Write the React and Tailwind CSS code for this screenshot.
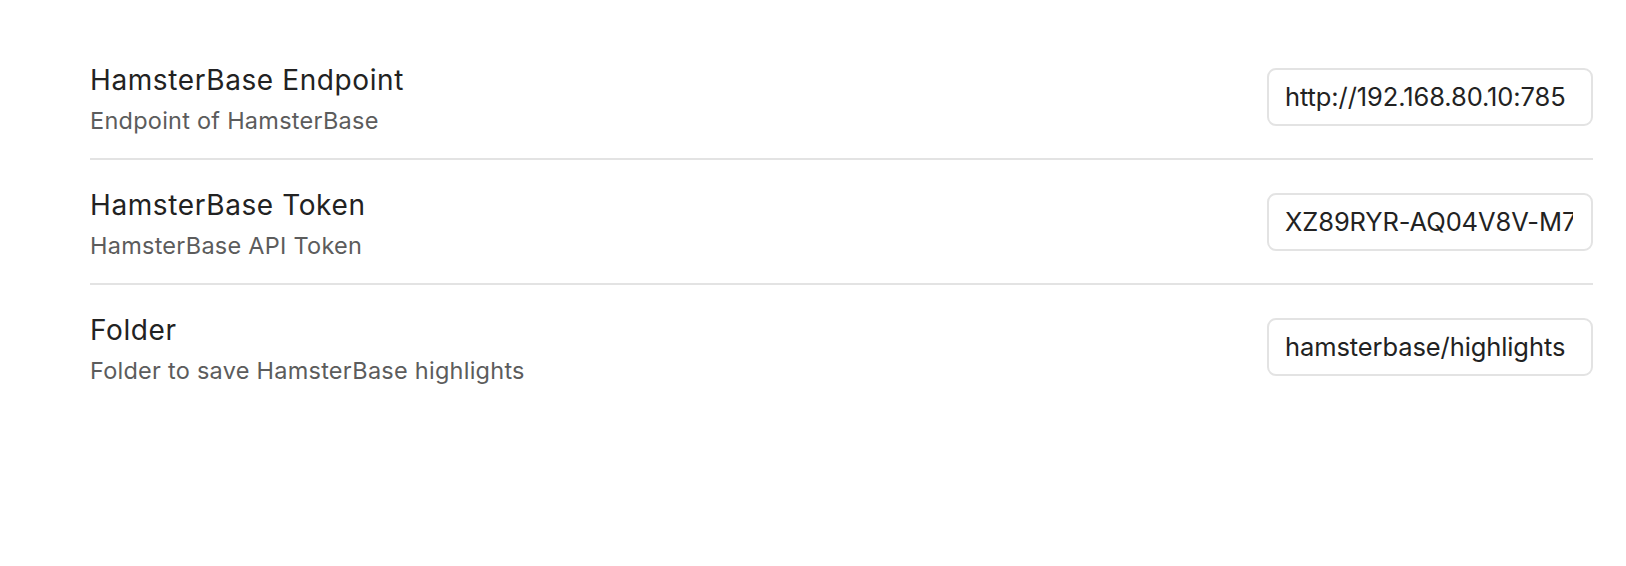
import { useState } from "react";

const settings = [
  {
    name: "HamsterBase Endpoint",
    desc: "Endpoint of HamsterBase",
    value: "http://192.168.80.10:785",
  },
  {
    name: "HamsterBase Token",
    desc: "HamsterBase API Token",
    value: "XZ89RYR-AQ04V8V-M7K2P1Q-ZT6WXH3",
  },
  {
    name: "Folder",
    desc: "Folder to save HamsterBase highlights",
    value: "hamsterbase/highlights",
  },
];

const SettingRow = ({ item, last }) => {
  const [value, setValue] = useState(item.value);

  return (
    <div
      className={`flex items-center justify-between h-[125px] border-b-[2px] ${
        last ? "border-transparent" : "border-[#e3e3e3]"
      }`}
    >
      <div className="flex flex-col pt-[5px]">
        <div className="text-[28px] leading-[36px] tracking-[0.6px] text-[#222222]">
          {item.name}
        </div>
        <div className="mt-[7px] text-[23.5px] leading-[32px] tracking-[0.25px] text-[#5c5c5c]">
          {item.desc}
        </div>
      </div>
      <input
        type="text"
        value={value}
        onChange={(e) => setValue(e.target.value)}
        className="w-[326px] h-[58px] pl-[16px] pr-[18px] rounded-[9px] border-[2px] border-[#e3e3e3] bg-white text-[25.5px] tracking-[-0.1px] text-[#222222] outline-none"
      />
    </div>
  );
};

const App = () => {
  return (
    <div
      className="w-[1626px] h-[566px] bg-white pt-[35px] pl-[90px] pr-[33px]"
      style={{ fontFamily: "Inter, 'Noto Sans', sans-serif" }}
    >
      {settings.map((item, i) => (
        <SettingRow key={item.name} item={item} last={i === settings.length - 1} />
      ))}
    </div>
  );
};

export default App;
